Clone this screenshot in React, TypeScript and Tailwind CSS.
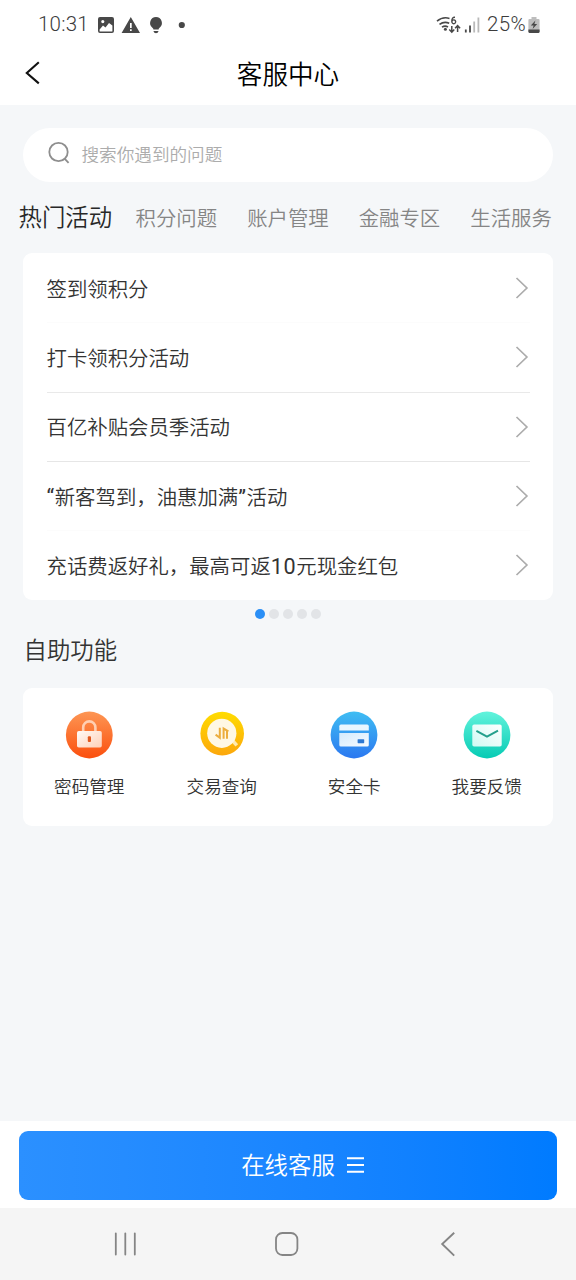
import React from "react";

const tabs = ["积分问题", "账户管理", "金融专区", "生活服务"];

const questions = [
  { text: "签到领积分", line: "border-[#fcfcfc]" },
  { text: "打卡领积分活动", line: "border-[#e9e9e9]" },
  { text: "百亿补贴会员季活动", line: "border-[#e6e6e6]" },
  { text: "“新客驾到，油惠加满”活动", line: "border-[#fcfcfc]" },
  { text: "充话费返好礼，最高可返10元现金红包", line: "border-transparent" },
];

/* Sets quotes and digits in the Latin face, slightly tracked. */
function MixedText({ text }: { text: string }) {
  return (
    <>
      {text.split(/([“”]|\d+)/).map((part, i) =>
        i % 2 === 1 ? (
          <span key={i} className="font-['Roboto',sans-serif] text-[21.6px] font-normal leading-[0] tracking-[0.6px]">
            {part}
          </span>
        ) : (
          part
        ),
      )}
    </>
  );
}

function StatusBar() {
  return (
    <div className="flex h-[49px] items-center justify-between pl-[38px] pr-[35px] font-['Roboto',sans-serif] text-[20.5px] font-light text-[#3c3c3c]">
      <div className="flex items-center">
        <span className="w-[59px] tracking-[0.2px]">10:31</span>
        <svg width="92" height="20" viewBox="0 0 92 20" fill="#484848">
          <path
            fillRule="evenodd"
            d="M3 2H15Q17 2 17 4V16Q17 18 15 18H3Q1 18 1 16V4Q1 2 3 2ZM2.6 14.5V16Q2.6 16.5 3.2 16.5H14.8Q15.4 16.5 15.4 16V10.5L12 8L8.5 12.5L6 10.5ZM5.8 5A1.6 1.6 0 1 0 5.8 8.2A1.6 1.6 0 1 0 5.8 5Z"
          />
          <path fillRule="evenodd" d="M33.8 2L43 18H24.6ZM33 8V13H34.7V8ZM33 14.3V16H34.7V14.3Z" />
          <path d="M59 2A6 6 0 0 1 62.6 12.7Q61.6 13.4 61.6 14.6H56.4Q56.4 13.4 55.4 12.7A6 6 0 0 1 59 2ZM56.4 16H61.6Q61 18.2 59 18.2T56.4 16Z" />
          <circle cx="84.8" cy="10" r="3.1" />
        </svg>
      </div>
      <div className="flex items-center">
        <svg width="46" height="20" viewBox="0 0 46 20" fill="none" stroke="#484848" strokeWidth="1.6">
          <path d="M1 6.2Q6.5 1.4 13.5 3.4M3.5 9.4Q8 6 13.2 8.2M6 12.2Q9 10.2 12 12" />
          <circle cx="9.4" cy="14.2" r="1.5" fill="#484848" stroke="none" />
          <path d="M19 2.2Q15.8 2 15.8 6.2M17.8 4.9A1.9 1.9 0 1 1 17.7 4.9Z" strokeWidth="1.4" />
          <path d="M15.8 11V17M13.3 14.6L15.8 17.2L18.3 14.6M21.6 17V11M19.1 13.3L21.6 10.7L24.1 13.3" strokeWidth="1.5" />
          <path d="M29.8 14.5V17.5M34 10.5V17.5" strokeWidth="1.8" />
          <path d="M38.2 6.5V17.5M42.4 2.5V17.5" stroke="#b9b9b9" strokeWidth="1.8" />
        </svg>
        <span className="ml-[5px] tracking-[0.4px]">25%</span>
        <svg className="ml-[2px]" width="13" height="20" viewBox="0 0 13 20">
          <path d="M3.5 2H8.5V4H10.5Q11.6 4 11.6 5.2V16.6Q11.6 18 10.5 18H1.5Q.4 18 .4 16.6V5.2Q.4 4 1.5 4H3.5Z" fill="#bdbdbd" />
          <path d="M.4 14.6H11.6V16.6Q11.6 18 10.5 18H1.5Q.4 18 .4 16.6Z" fill="#484848" />
          <path d="M7.4 5.4L2.8 10.4H5.6L4.6 14L9.2 9H6.4Z" fill="#484848" />
        </svg>
      </div>
    </div>
  );
}

function LockIcon() {
  return (
    <svg width="48" height="48" viewBox="0 0 48 48">
      <defs>
        <linearGradient id="lock-bg" x1="0" y1="0" x2="0" y2="1">
          <stop stopColor="#fd9654" />
          <stop offset="1" stopColor="#fb4f0e" />
        </linearGradient>
        <linearGradient id="lock-body" x1="0" y1="0" x2="1" y2="1">
          <stop stopColor="#fffaf6" />
          <stop offset="1" stopColor="#ffd0b8" />
        </linearGradient>
      </defs>
      <circle cx="24.3" cy="24" r="23.4" fill="url(#lock-bg)" />
      <path d="M18.2 21V16.5A6.1 6.1 0 0 1 30.4 16.5V21" fill="none" stroke="#ffcfb2" strokeWidth="2.6" />
      <rect x="12" y="20" width="24.8" height="16.6" rx="1.8" fill="url(#lock-body)" />
      <rect x="22.8" y="25.2" width="3.2" height="5.8" rx="1" fill="#e2581f" />
    </svg>
  );
}

function QueryIcon() {
  return (
    <svg width="48" height="48" viewBox="0 0 48 48">
      <defs>
        <linearGradient id="query-bg" x1="0" y1="0" x2="0" y2="1">
          <stop stopColor="#ffdc00" />
          <stop offset="1" stopColor="#fca70c" />
        </linearGradient>
      </defs>
      <circle cx="24.2" cy="22.6" r="21.8" fill="url(#query-bg)" />
      <path d="M34 29L38.8 34.4" stroke="#ffeab0" strokeWidth="3.4" />
      <circle cx="23.8" cy="22.3" r="14.6" fill="#fff8e4" />
      <path d="M17.6 23.6L21.8 26.8V16.8M25.6 27.8V17.6L30.4 20.4M29 19.6V27.8" fill="none" stroke="#ecae3e" strokeWidth="2" />
    </svg>
  );
}

function CardIcon() {
  return (
    <svg width="48" height="48" viewBox="0 0 48 48">
      <defs>
        <linearGradient id="card-bg" x1="0" y1="0" x2="0" y2="1">
          <stop stopColor="#3fbdf3" />
          <stop offset="1" stopColor="#2b78f0" />
        </linearGradient>
        <linearGradient id="card-body" x1="0" y1="0" x2="1" y2="1">
          <stop stopColor="#d3eafd" />
          <stop offset="1" stopColor="#f7fbff" />
        </linearGradient>
      </defs>
      <circle cx="24" cy="24" r="23.4" fill="url(#card-bg)" />
      <path d="M9.3 19.5V15.2Q9.3 13.6 10.9 13.6H37.2Q38.8 13.6 38.8 15.2V19.5Z" fill="#e9f6ff" />
      <path d="M9.3 22H38.8V34Q38.8 35.6 37.2 35.6H10.9Q9.3 35.6 9.3 34Z" fill="url(#card-body)" />
      <rect x="27.6" y="28.2" width="6.6" height="4" rx=".6" fill="#2d78d2" />
    </svg>
  );
}

function MailIcon() {
  return (
    <svg width="48" height="48" viewBox="0 0 48 48">
      <defs>
        <linearGradient id="mail-bg" x1="0" y1="0" x2="0" y2="1">
          <stop stopColor="#62f3dc" />
          <stop offset="1" stopColor="#06cbb4" />
        </linearGradient>
        <linearGradient id="mail-body" x1="1" y1="0" x2="0" y2="1">
          <stop stopColor="#ffffff" />
          <stop offset="1" stopColor="#cffaf3" />
        </linearGradient>
      </defs>
      <circle cx="24" cy="24" r="23.4" fill="url(#mail-bg)" />
      <rect x="9.3" y="13.6" width="29.4" height="22" rx="1.8" fill="url(#mail-body)" />
      <path d="M13.4 19.8L24 25.6L35 19.6" fill="none" stroke="#23a08c" strokeWidth="2" />
    </svg>
  );
}

const services = [
  { label: "密码管理", Icon: LockIcon },
  { label: "交易查询", Icon: QueryIcon },
  { label: "安全卡", Icon: CardIcon },
  { label: "我要反馈", Icon: MailIcon },
];

export default function App() {
  return (
    <div className="flex h-[1280px] w-[576px] flex-col overflow-hidden bg-[#f5f7f9] font-['Noto_Sans_CJK_SC',sans-serif] font-[350] text-[#333]">
      <header className="h-[105px] shrink-0 bg-white">
        <StatusBar />
        <div className="grid h-[48px] grid-cols-[80px_1fr_80px] items-center">
          <svg className="ml-[23px]" width="18" height="24" viewBox="0 0 18 24" fill="none" stroke="#111" strokeWidth="2.1">
            <path d="M15.8 1.2L3.8 12L15.8 22.4" />
          </svg>
          <h1 className="text-center text-[25.6px] leading-none text-black">客服中心</h1>
        </div>
      </header>

      <main className="flex flex-1 flex-col">
        <div className="mx-[23px] mt-[23px] flex h-[54px] items-center rounded-full bg-white pl-[25px]">
          <svg className="mb-[4px]" width="23" height="24" viewBox="0 0 23 24" fill="none" stroke="#8e8e8e" strokeWidth="1.8">
            <circle cx="10.5" cy="11" r="9.2" />
            <path d="M16.8 17.8L20.6 21.8" />
          </svg>
          <span className="mb-[2px] ml-[10.5px] text-[17.6px] leading-none text-[#acacac]">搜索你遇到的问题</span>
        </div>

        <nav className="mt-[17px] flex h-[36px] items-center gap-[30px] whitespace-nowrap pl-[18.5px] text-[20.4px] leading-none text-[#858585]">
          <span className="-mr-[6.5px] text-[23.4px] text-[#282828]">热门活动</span>
          {tabs.map((tab) => (
            <span key={tab}>{tab}</span>
          ))}
        </nav>

        <section className="mx-[23px] mt-[18px] h-[347px] rounded-[9px] bg-white pl-[23.5px] pr-[23px] pt-px">
          {questions.map((q) => (
            <div key={q.text} className={`flex h-[69.3px] items-center justify-between border-b ${q.line}`}>
              <span className="pb-px text-[20.4px] leading-[20px]">
                <MixedText text={q.text} />
              </span>
              <svg width="16" height="24" viewBox="0 0 16 24" fill="none" stroke="#acacac" strokeWidth="1.7">
                <path d="M2.5 2L12.9 12L2.5 22" />
              </svg>
            </div>
          ))}
        </section>

        <div className="mt-[9px] flex justify-center gap-[4px]">
          <i className="size-[10px] rounded-full bg-[#2b8ff6]" />
          <i className="size-[10px] rounded-full bg-[#e2e4e7]" />
          <i className="size-[10px] rounded-full bg-[#e2e4e7]" />
          <i className="size-[10px] rounded-full bg-[#e2e4e7]" />
          <i className="size-[10px] rounded-full bg-[#e2e4e7]" />
        </div>

        <h2 className="mb-px ml-[23.5px] mt-[18px] text-[23.4px] leading-[24px]">自助功能</h2>

        <section className="mx-[23px] mt-[26px] grid h-[138px] grid-cols-4 rounded-[9px] bg-white">
          {services.map(({ label, Icon }) => (
            <div key={label} className="flex flex-col items-center pt-[23px]">
              <Icon />
              <span className="mt-[18px] text-[17.6px] leading-none">{label}</span>
            </div>
          ))}
        </section>
      </main>

      <div className="h-[87px] shrink-0 bg-white px-[19px] pt-[10px]">
        <button className="flex h-[69px] w-full items-center justify-center rounded-[9px] bg-linear-to-r from-[#2b90ff] to-[#007bff] pb-[2px] pl-[30px] text-[23.4px] leading-none text-white">
          在线客服
          <svg className="ml-[11px]" width="19" height="20" viewBox="0 0 19 20" stroke="#fff" strokeWidth="2">
            <path d="M1 3.2H18M1 10H18M1 16.8H18" />
          </svg>
        </button>
      </div>

      <footer className="flex h-[72px] shrink-0 items-center bg-[#f5f5f5] pl-[113px]">
        <svg width="24" height="26" viewBox="0 0 24 26" stroke="#858585" strokeWidth="1.8" strokeLinecap="round">
          <path d="M2.8 2.3V23.6M12.3 2.3V23.6M21.8 2.3V23.6" />
        </svg>
        <svg className="ml-[137px]" width="26" height="26" viewBox="0 0 26 26" fill="none" stroke="#858585" strokeWidth="1.8">
          <rect x="2" y="2" width="21.4" height="22" rx="6.4" />
        </svg>
        <svg className="ml-[140px]" width="18" height="26" viewBox="0 0 18 26" fill="none" stroke="#858585" strokeWidth="1.9">
          <path d="M14.2 1.8L2.2 13L14.2 24.6" />
        </svg>
      </footer>
    </div>
  );
}
